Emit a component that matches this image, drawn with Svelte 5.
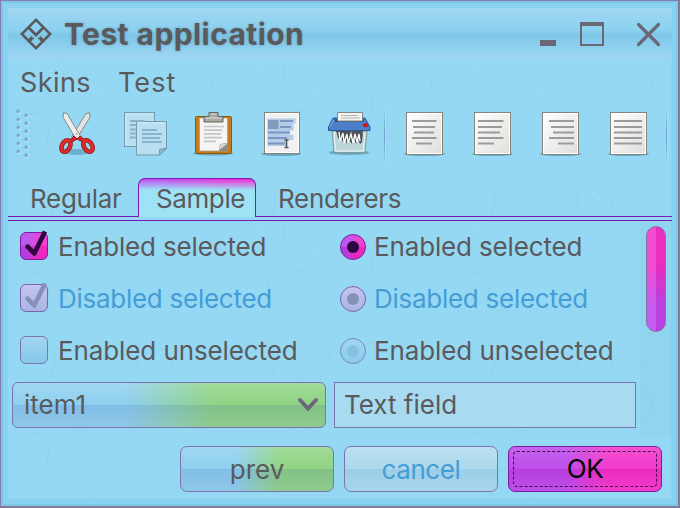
<script>
  const aligned = [
    [[11, 35.5], [12, 34], [13, 33], [11, 35.5], [15, 31]],
    [[9, 34.5], [9, 33], [9, 31], [9, 34.5], [9, 25]],
    [[12, 37], [14, 37], [16, 37], [12, 37], [21, 37]],
    [[9, 37], [9, 37], [9, 37], [9, 37], [9, 37]]
  ];
  const lineY = [13, 19, 24.5, 30, 35.5];
  const rows = [
    { text: 'Enabled selected', state: 'on' },
    { text: 'Disabled selected', state: 'dis' },
    { text: 'Enabled unselected', state: 'off' }
  ];
</script>

<div class="window">
  <svg class="texture" width="664" height="492" viewBox="0 0 664 492">
    <defs>
      <pattern id="squiggle" width="220" height="160" patternUnits="userSpaceOnUse">
        <path d="M10 30l14-14h16l8 12-4 18 12 10v20l-16 12M80 10c20 0 26 12 20 22s-22 8-26 20 8 24 22 22M130 40v-18l14-8 20 14v12l14 8 16-14M6 120c14-20 30-18 34-6s-8 26 6 28 26-12 40-12M110 100l20-22 14 6v22l22 4 10-16M120 140c10 12 26 8 30-2s18-14 30-6 22 2 26-10M190 60c14 6 18 20 8 30M60 90l10 14 14-4" />
        <g class="dots"><rect x="30" y="60" width="1" height="1"/><rect x="90" y="82" width="2" height="1"/><rect x="150" y="30" width="1" height="2"/><rect x="200" y="130" width="1" height="1"/><rect x="50" y="140" width="1" height="1"/></g>
      </pattern>
    </defs>
    <rect width="664" height="492" fill="url(#squiggle)" />
  </svg>

  <header class="title">
    <svg width="32" height="32" viewBox="0 0 32 32" fill="none" stroke="#5a5a5c" stroke-width="2.5">
      <path d="M16 1.8L30.2 16L16 30.2L1.8 16Z" />
      <path d="M8.500 9.500L16 17L23.500 9.500" stroke-width="2.8" />
      <path d="M11.500 18v5M9 20.500h5M20.500 18v5M18 20.500h5" stroke-width="1.500" />
      <path d="M8 24l3-3M24 24l-3-3" stroke-width="1.800" />
    </svg>
    <h1>Test application</h1>
    <svg class="controls" width="124" height="28" viewBox="0 0 124 28">
      <rect x="0" y="20" width="16" height="6" fill="#6a6876" />
      <path d="M41 3h22v22h-22z" fill="none" stroke="#6a6876" stroke-width="2" />
      <rect x="40" y="2" width="24" height="4" fill="#6a6876" />
      <path d="M98.5 4.5l20 20M118.5 4.5l-20 20" stroke="#6a6876" stroke-width="3.2" stroke-linecap="round" />
    </svg>
  </header>

  <nav class="menu"><span>Skins</span><span class="test">Test</span></nav>

  <div class="toolbar">
    <svg class="grip" width="16" height="52" viewBox="0 0 16 52">
      {#each [0, 1, 2, 3, 4, 5] as i}
        <circle cx="3.2" cy={4.2 + i * 8} r="2.1" fill="#fff" opacity=".35" /><circle cx="2.2" cy={3.2 + i * 8} r="1.9" fill="#7fadd9" />
        <circle cx="11.2" cy={8.2 + i * 8} r="2.1" fill="#fff" opacity=".35" /><circle cx="10.2" cy={7.2 + i * 8} r="1.9" fill="#7fadd9" />
      {/each}
    </svg>
    <svg class="icon" viewBox="0 0 48 48">
      <ellipse cx="24" cy="44" rx="13" ry="3" fill="#4387a5" opacity=".5" />
      <path d="M33 5.5l3.500-.8.5 4.500L23.5 31l-5-2z" fill="#e2e4e4" stroke="#85898c" />
      <path d="M14 5.5l-3.500-.8-.5 4.500L23 31l5-2z" fill="#eeeeec" stroke="#85898c" />
      <ellipse cx="13" cy="38" rx="4" ry="6.2" transform="rotate(28 13 38)" fill="none" stroke="#97181b" stroke-width="4.600" />
      <ellipse cx="35" cy="38" rx="4" ry="6.2" transform="rotate(-32 35 38)" fill="none" stroke="#97181b" stroke-width="4.600" />
      <path d="M17 32l4-4 3 3 3-3 5 4-2 2-6-3-5 3z" fill="#dc2222" stroke="#97181b" />
      <ellipse cx="13" cy="38" rx="4" ry="6.2" transform="rotate(28 13 38)" fill="none" stroke="#e32b2b" stroke-width="2.800" />
      <ellipse cx="35" cy="38" rx="4" ry="6.2" transform="rotate(-32 35 38)" fill="none" stroke="#e32b2b" stroke-width="2.800" />
      <circle cx="23.5" cy="26" r="1" fill="#aaa" />
    </svg>
    <svg class="icon" viewBox="0 0 48 48">
      <g fill="#b9def0" stroke="#7399b3"><rect x="3.5" y="4.5" width="30" height="34" /><path d="M15.5 13.5h30v27l-7 6.500h-23z" /></g>
      <path d="M38.500 47v-5.500l7-1.500z" fill="#8db9cd" stroke="#7399b3" />
      <path d="M5 37V6h27M17 45V15h27" stroke="#d3ecf7" fill="none" />
      <path d="M9 13h15M9 17h6M9 21.500h6M9 25.500h6M9 29.500h6M21 22h15M21 26h20M21 30h18M21 34h20" stroke="#87b3cb" stroke-width="1.8" fill="none" />
    </svg>
    <svg class="icon" viewBox="0 0 48 48">
      <ellipse cx="24" cy="45.500" rx="20" ry="2" fill="#3f7588" opacity=".5" />
      <rect x="6.500" y="8.500" width="36" height="37" rx="1" fill="#c17d19" stroke="#8f5902" />
      <path d="M10.500 10h28v33h-28z" fill="#f5f5f4" stroke="#aaa28f" stroke-width=".8" />
      <path d="M30 43l1-7 7.500-1v8z" fill="#8a8c88" /><path d="M30.500 42l1-6 7-.5z" fill="#d5d7d3" />
      <path d="M20 4.500h9v4h5v5.500h-19v-5.500h5z" fill="#a9aba2" stroke="#62635d" /><path d="M16.500 10h16M21.500 6h6" stroke="#d9dad3" />
      <path d="M15 18.500h20M15 22.200h18M15 25.900h17M15 29.600h18M15 33.300h12" stroke="#c4c5c4" stroke-width="1.7" />
    </svg>
    <svg class="icon" viewBox="0 0 48 48">
      <ellipse cx="24" cy="46" rx="20" ry="2" fill="#3f7588" opacity=".5" />
      <rect x="7.500" y="4.500" width="35" height="41" fill="#f1f1f1" stroke="#84857f" /><rect x="8.500" y="5.500" width="33" height="39" fill="none" stroke="#fff" />
      <path d="M10.500 10.500h28v5h-2v7h-4v4.500h4v5h-6v6h-20z" fill="#b4cce8" />
      <rect x="11" y="12" width="10.500" height="9" fill="#839abc" />
      <path d="M23 13h13M23 19h11M11 24.500h22M11 30h19M11 35.500h17" stroke="#7a97c2" stroke-width="1.800" />
      <path d="M27.500 32h4M29.500 32v7.500M27.500 39.500h4" stroke="#555753" stroke-width="1.400" />
    </svg>
    <svg class="icon" viewBox="0 0 48 48">
      <ellipse cx="24" cy="44.500" rx="20" ry="2.500" fill="#3f7588" opacity=".5" />
      <path d="M7 23h35l-2 21.500h-31z" fill="#bdd6d9" stroke="#7e9a9d" /><path d="M9 25h31l-1.500 18h-28z" fill="none" stroke="#ebf6f6" />
      <path d="M11 23h27l-1 11-2 2-2-5-2 5-2-6-2 6-3-4-2 4-2-5-2 4-2-6-1 3-2-2z" fill="#4f5354" />
      <path d="M14 24l1 9 3-8 1 10 3-9 1 9 3-9 2 9 2-9 2 8 2-8 1 7" fill="none" stroke="#fff" stroke-width="1.300" />
      <path d="M8 10h32l5 9v3.500H3.500V19z" fill="#4c7fc5" stroke="#2959a0" stroke-linejoin="round" /><path d="M8.500 12L5 19" stroke="#8badde" />
      <rect x="10" y="10.500" width="29" height="3.500" rx="1" fill="#284d83" /><path d="M12.500 4.500h25v8.500h-25z" fill="#f3f3f2" stroke="#858781" /><path d="M16 7.500h17M16 10h19" stroke="#b5b6b4" />
      <ellipse cx="40.500" cy="17.300" rx="2.600" ry="2" fill="#dc1111" />
    </svg>
    <i class="sep"></i>
    {#each aligned as lines, n}
      <svg class="icon" viewBox="0 0 48 48">
        <ellipse cx="23.500" cy="46" rx="20.500" ry="2" fill="#3f7588" opacity=".5" />
        <linearGradient id="page{n}" x2="1" y2="1"><stop stop-color="#fff" /><stop offset="1" stop-color="#dededc" /></linearGradient>
        <rect x="5.500" y="4.500" width="36" height="42" fill="url(#page{n})" stroke="#84857f" /><rect x="6.500" y="5.500" width="34" height="40" fill="none" stroke="#fff" />
        {#each lines as [a, b], i}<path d="M{a} {lineY[i]}H{b}" stroke="#9b9b9a" stroke-width="2" />{/each}
      </svg>
    {/each}
    <i class="sep last"></i>
  </div>

  <div class="tabs">
    <span class="tab reg">Regular</span><span class="tab active">Sample</span><span class="tab ren">Renderers</span>
  </div>

  <div class="content">
    <div class="fields">
      {#each rows as row}
        <div class="cell {row.state}">
          <span class="box">
            {#if row.state !== 'off'}
              <svg width="30" height="32" viewBox="0 0 30 32"><path d="M7.500 16.500L14.300 23.500L25 1.500" fill="none" stroke={row.state === 'on' ? '#2d0640' : '#8692b5'} stroke-width="4.600" stroke-linejoin="round" /><circle cx="7.500" cy="16.500" r="2.300" fill={row.state === 'on' ? '#2d0640' : '#8692b5'} /></svg>
            {/if}
          </span>
          <span class="label">{row.text}</span>
        </div>
        <div class="cell right {row.state}">
          <span class="radio"><b></b></span>
          <span class="label">{row.text}</span>
        </div>
      {/each}
      <div class="combo"><span>item1</span>
        <svg width="22" height="16" viewBox="0 0 22 16"><path d="M3 3L11 11.500L19 3" fill="none" stroke="#6a6876" stroke-width="4" stroke-linecap="round" /></svg>
      </div>
      <div class="text">Text field</div>
    </div>
    <div class="track"><div class="thumb"></div></div>
  </div>

  <footer>
    <div class="btn prev">prev</div>
    <div class="btn cancel">cancel</div>
    <div class="btn ok"><span>OK</span></div>
  </footer>
</div>

<style>
  :global(body) { margin: 0; overflow: hidden; }
  .window {
    position: relative; box-sizing: border-box; width: 680px; height: 508px; padding: 7px 6px 6px 7px;
    display: flex; flex-direction: column;
    border: 1px solid #8180b0; border-right: 2px solid #807e97; border-bottom: 2px solid #807e97;
    background: #95d8f3; box-shadow: inset 0 0 0 2px #80c6eb, inset 0 0 0 7px #8ad2f2;
    font: 26px/32px Inter, "Liberation Sans", sans-serif; color: #5a5a5c; white-space: nowrap;
  }
  .texture { position: absolute; left: 7px; top: 7px; }
  .texture path { fill: none; stroke: #7bafc6; stroke-width: 1; opacity: .17; }
  .dots { fill: #a8efe8; }
  .title, .menu, .toolbar, .tabs, .content, footer { position: relative; display: flex; flex: none; }
  .title {
    height: 52px; box-sizing: border-box; align-items: center; padding: 0 8px 0 12px;
    background: linear-gradient(rgba(162,214,242,.95), rgba(139,210,240,.95) 42%, rgba(126,198,232,.95) 52%, rgba(144,208,239,.95) 78%, rgba(162,214,242,.95));
  }
  h1 { margin: 0 0 0 12px; font-size: 30px; line-height: 51px; font-weight: 700; letter-spacing: .42px; text-shadow: 0 0 3px rgba(70,110,140,.5); }
  .controls { margin-left: auto; }
  .menu { height: 44px; box-sizing: border-box; padding: 7px 0 0 12px; gap: 27px; font-size: 27px; letter-spacing: .4px; }
  .menu .test { letter-spacing: 1.100px; }
  .toolbar { height: 72px; padding: 4px 0 0 8px; box-sizing: border-box; align-items: flex-start; }
  .grip { margin-right: 9px; }
  .icon { width: 48px; height: 48px; margin: 0 10px; flex: none; }
  .grip + .icon { margin-left: 12px; }
  .sep { width: 1px; height: 60px; flex: none; margin: -2px 6px 0 1px; background: linear-gradient(rgba(113,155,207,0), #719bcf, rgba(113,155,207,0)); box-shadow: 1px 0 rgba(180,230,250,.5); }
  .sep.last { margin: -2px 0 0 3px; }
  .tabs { height: 45px; box-sizing: border-box; border-bottom: 1px solid #7a18b5; padding-top: 2px; margin-bottom: 1px; align-items: flex-start; }
  .tabs::after { content: ''; position: absolute; left: 0; right: 0; bottom: 3px; height: 1px; background: #7a18b5; }
  .tab { height: 39px; line-height: 42px; box-sizing: border-box; letter-spacing: -.3px; }
  .reg { width: 130px; padding-left: 22px; }
  .active {
    position: relative; z-index: 1; width: 118px; padding-left: 17px; border: 1px solid #7a18b5; border-bottom: 0; border-radius: 7px 7px 0 0; line-height: 40px;
    background: linear-gradient(transparent, #9ee3f5 11px), linear-gradient(90deg, #bf4cf0 20%, #f02ad5 75%);
  }
  .tab.active { letter-spacing: -.4px; }
  .ren { padding-left: 22px; }
  .content { height: 218px; justify-content: space-between; }
  .fields { display: grid; grid-template-columns: 314px 302px; grid-template-rows: 52px 52px 52px 46px; column-gap: 8px; row-gap: 0; padding-left: 4px; margin-top: -2px; }
  .cell { display: flex; align-items: center; padding-left: 8px; }
  .cell.right { padding-left: 6px; }
  .box { position: relative; box-sizing: border-box; width: 28px; height: 28px; border: 1px solid #7b75ae; border-radius: 6px; background: linear-gradient(#a2d5f0, #85c8e9); margin-right: 10px; }
  .box svg { position: absolute; left: -1px; top: -3px; }
  .radio { box-sizing: border-box; width: 26px; height: 26px; border: 1px solid #7b86b9; border-radius: 50%; background: linear-gradient(#9fd5f0, #88cdeb); margin: 2px 8px 0 0; display: grid; place-items: center; }
  .radio b { width: 12px; height: 12px; border-radius: 50%; background: #87c0e2; }
  .on .box, .on .radio { border-color: #7c1b9f; background: linear-gradient(rgba(255,255,255,.1) 50%, rgba(170,0,80,.1) 50%), linear-gradient(100deg, #b744ec 30%, #f32cca 70%); }
  .on .radio b { background: #2d0640; }
  .dis .box, .dis .radio { border-color: #8061ae; background: linear-gradient(#c5c5f0, #a9b5e4); }
  .dis .radio b { background: #8692b5; }
  .label { padding-top: 2px; letter-spacing: -.15px; }
  .dis .label { color: #459dd5; letter-spacing: -.27px; }
  .off .label { letter-spacing: -.1px; }
  .combo, .text { box-sizing: border-box; height: 46px; border: 1px solid #7b75ae; display: flex; align-items: center; padding: 0 6px 0 11px; justify-content: space-between; margin-top: 6px; }
  .combo { border-radius: 6px; background: linear-gradient(rgba(255,255,255,.19), rgba(255,255,255,.03) 50%, rgba(80,90,180,.14) 50%, rgba(160,160,200,.15)), linear-gradient(90deg, #8aceef 36%, #8cd281 64%); }
  .text { background: #a8dbf2; padding-left: 9px; }
  .track { width: 32px; height: 216px; box-sizing: border-box; background: rgba(132,202,232,.3); padding: 4px 6px; }
  .thumb { width: 20px; height: 106px; box-sizing: border-box; border: 1px solid #8275a8; border-radius: 10px; background: linear-gradient(90deg, rgba(255,255,255,.12) 50%, rgba(150,0,80,.1) 50%), linear-gradient(#f333ca 35%, #bd48ee 75%); }
  footer { gap: 10px; justify-content: flex-end; padding: 6px 10px 0 0; }
  .btn { box-sizing: border-box; width: 154px; height: 46px; line-height: 45px; text-align: center; border: 1px solid #7b75ae; border-radius: 7px; }
  .prev { background: linear-gradient(rgba(255,255,255,.19), rgba(255,255,255,.03) 50%, rgba(80,90,180,.14) 50%, rgba(160,160,200,.15)), linear-gradient(90deg, #8aceef 36%, #8cd281 64%); }
  .cancel { color: #459dd5; letter-spacing: -.4px; background: linear-gradient(#bce0f1, #acd8ed 50%, #9dcee7 50%, #a8d5eb); }
  .ok { color: #000; padding: 4px; border-color: #7c1b9f; background: linear-gradient(rgba(255,255,255,.16), rgba(255,255,255,.05) 50%, rgba(150,0,80,.09) 50%, rgba(255,255,255,.06)), linear-gradient(90deg, #b944ea 36%, #f22fc9 65%); }
  .ok span { display: block; box-sizing: border-box; height: 36px; line-height: 34px; border: 1px dashed #43094f; border-radius: 4px; letter-spacing: -.5px; }
</style>
